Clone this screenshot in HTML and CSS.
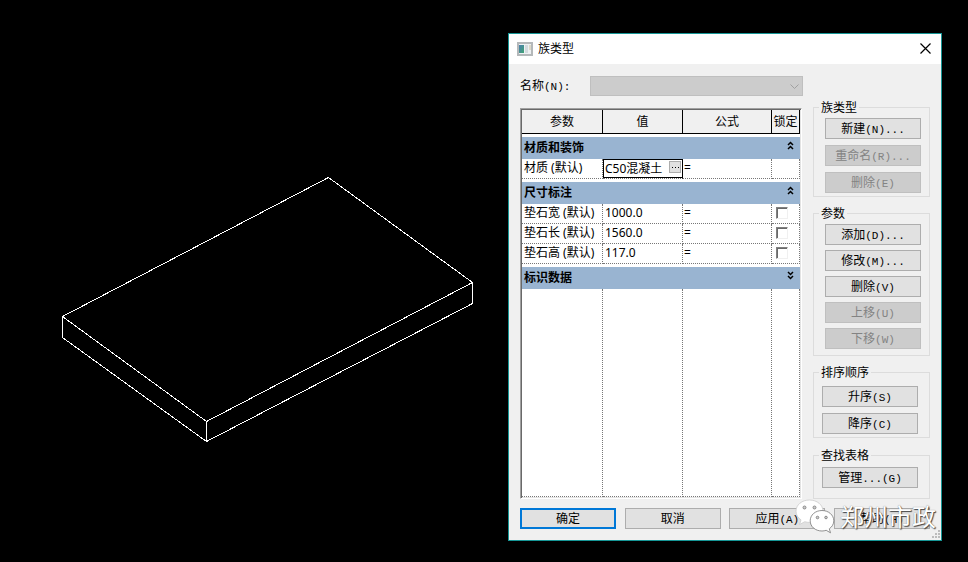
FILE: index.html
```html
<!DOCTYPE html>
<html lang="zh-CN">
<head>
<meta charset="utf-8">
<meta name="viewport" content="width=device-width, initial-scale=1">
<title>族类型</title>
<link rel="stylesheet" href="styles.css">
</head>
<body>
<main class="workspace">
  <svg class="model" viewBox="0 0 508 562" aria-hidden="true">
    <path d="M62.500 316.500 328.500 177.500 472.500 282.500 206.500 421.500ZM62.500 316.500V337.500L206.500 441.500 472.500 303.500V282.500M206.500 421.500V441.500"/>
  </svg>

  <section class="dialog" role="dialog" aria-labelledby="dialog-title">
    <header class="titlebar">
      <svg class="app-icon" width="16" height="14" viewBox="0 0 16 14" aria-hidden="true">
        <defs>
          <linearGradient id="pane" x1="0" y1="0" x2="1" y2="1">
            <stop offset="0" stop-color="#4d7fb0"/>
            <stop offset="1" stop-color="#3fa372"/>
          </linearGradient>
        </defs>
        <rect x="1" y="1" width="14" height="12" fill="#eef1f3" stroke="#b4b8ba" stroke-width="2"/>
        <rect x="2" y="3" width="5" height="8" fill="url(#pane)"/>
        <rect x="8" y="3" width="3" height="8" fill="#d3dade"/>
        <rect x="12" y="3" width="2" height="5" fill="#dcd9c8"/>
      </svg>
      <h1 class="title" id="dialog-title">族类型</h1>
      <button class="close" type="button" aria-label="关闭">
        <svg width="11" height="11" viewBox="0 0 11 11" aria-hidden="true"><path d="M0.500 0.500 10.500 10.500M10.500 0.500 0.500 10.500"/></svg>
      </button>
    </header>

    <form class="content">
      <div class="name-row">
        <label for="type-name">名称<span class="key">(N):</span></label>
        <div class="select-wrap">
          <select id="type-name" disabled></select>
          <svg class="select-arrow" width="9" height="6" viewBox="0 0 9 6" aria-hidden="true"><path d="M0.500 0.500 4.500 4.500 8.500 0.500"/></svg>
        </div>
      </div>

      <div class="main">
        <div class="grid-frame">
          <table class="params">
            <colgroup>
              <col class="col-name"><col class="col-value"><col><col class="col-lock">
            </colgroup>
            <thead>
              <tr><th>参数</th><th>值</th><th>公式</th><th>锁定</th></tr>
            </thead>
            <tbody>
              <tr class="group">
                <th colspan="4"><button type="button" class="toggle">材质和装饰
                  <svg width="7" height="9" viewBox="0 0 7 9" aria-hidden="true"><path d="M1 4 3.500 1.500 6 4M1 8 3.500 5.500 6 8"/></svg></button></th>
              </tr>
              <tr class="item">
                <td><label for="material">材质 (默认)</label></td>
                <td class="editing"><div class="editor"><input id="material" type="text" value="C50混凝土"><button type="button" class="browse" aria-label="浏览"><svg width="7" height="1" viewBox="0 0 7 1" aria-hidden="true"><path d="M0 0h1v1h-1zM3 0h1v1h-1zM6 0h1v1h-1z"/></svg></button></div></td>
                <td>=</td><td></td>
              </tr>
              <tr class="group">
                <th colspan="4"><button type="button" class="toggle">尺寸标注
                  <svg width="7" height="9" viewBox="0 0 7 9" aria-hidden="true"><path d="M1 4 3.500 1.500 6 4M1 8 3.500 5.500 6 8"/></svg></button></th>
              </tr>
              <tr class="item"><td>垫石宽 (默认)</td><td>1000.0</td><td>=</td><td><input type="checkbox" aria-label="锁定垫石宽"></td></tr>
              <tr class="item"><td>垫石长 (默认)</td><td>1560.0</td><td>=</td><td><input type="checkbox" aria-label="锁定垫石长"></td></tr>
              <tr class="item"><td>垫石高 (默认)</td><td>117.0</td><td>=</td><td><input type="checkbox" aria-label="锁定垫石高"></td></tr>
              <tr class="group">
                <th colspan="4"><button type="button" class="toggle">标识数据
                  <svg width="7" height="9" viewBox="0 0 7 9" aria-hidden="true"><path d="M1 1 3.500 3.500 6 1M1 5 3.500 7.500 6 5"/></svg></button></th>
              </tr>
              <tr class="filler"><td></td><td></td><td></td><td></td></tr>
            </tbody>
          </table>
        </div>

        <div class="side">
          <fieldset>
            <legend>族类型</legend>
            <div class="stack types">
              <button type="button" class="btn">新建<span class="key">(N)...</span></button>
              <button type="button" class="btn" disabled>重命名<span class="key">(R)...</span></button>
              <button type="button" class="btn" disabled>删除<span class="key">(E)</span></button>
            </div>
          </fieldset>
          <fieldset>
            <legend>参数</legend>
            <div class="stack parameters">
              <button type="button" class="btn">添加<span class="key">(D)...</span></button>
              <button type="button" class="btn">修改<span class="key">(M)...</span></button>
              <button type="button" class="btn">删除<span class="key">(V)</span></button>
              <button type="button" class="btn" disabled>上移<span class="key">(U)</span></button>
              <button type="button" class="btn" disabled>下移<span class="key">(W)</span></button>
            </div>
          </fieldset>
          <fieldset>
            <legend>排序顺序</legend>
            <div class="stack sorting">
              <button type="button" class="btn">升序<span class="key">(S)</span></button>
              <button type="button" class="btn">降序<span class="key">(C)</span></button>
            </div>
          </fieldset>
          <fieldset>
            <legend>查找表格</legend>
            <div class="stack lookup">
              <button type="button" class="btn">管理<span class="key">...(G)</span></button>
            </div>
          </fieldset>
        </div>
      </div>

      <footer class="actions">
        <button type="button" class="btn primary">确定</button>
        <button type="button" class="btn">取消</button>
        <button type="button" class="btn">应用<span class="key">(A)</span></button>
        <button type="button" class="btn">帮助<span class="key">(H)</span></button>
      </footer>
    </form>

    <svg class="grip" width="8" height="8" viewBox="0 0 8 8" aria-hidden="true"><path d="M6 0h2v2h-2zM3 3h2v2h-2zM6 3h2v2h-2zM0 6h2v2h-2zM3 6h2v2h-2zM6 6h2v2h-2z"/></svg>

    <div class="watermark">
      <svg width="40" height="36" viewBox="0 0 40 36" aria-hidden="true">
        <path class="bubble" d="M14.500 1C6.800 1 1 5.900 1 12.200c0 3.600 1.900 6.600 5 8.700L4.600 25.500l5.200-2.800c1.700.5 3.100.7 4.700.7C22 23.400 28 18.500 28 12.200S22 1 14.500 1Z"/>
        <path class="bubble front" d="M27 11.500c-6.700 0-11.800 4.500-11.800 10.300S20.300 32 27 32c1.500 0 2.900-.3 4.200-.7l4.300 2.500-1.200-4c2.700-1.900 4.500-4.700 4.500-8C38.800 16 33.500 11.500 27 11.500Z"/>
        <g class="eyes">
          <circle cx="9.500" cy="8.500" r="1.500"/><circle cx="19.500" cy="8.500" r="1.500"/>
          <circle cx="22.500" cy="18.500" r="1.300"/><circle cx="31" cy="18.500" r="1.300"/>
        </g>
      </svg>
      <span>郑州市政</span>
    </div>
  </section>
</main>
</body>
</html>
```
FILE: styles.css
```css
* { box-sizing: border-box; }

body {
  margin: 0;
  background: #000;
  color: #000;
  font: 12px/14px "Noto Sans", "Noto Sans CJK SC", sans-serif;
}

button, input, select { font: inherit; color: inherit; margin: 0; }

.workspace {
  display: grid;
  grid-template-columns: minmax(0, 508fr) minmax(434px, 434fr) 26fr;
  align-items: start;
  min-height: 100vh;
}

.model { width: 100%; }
.model path { fill: none; stroke: #fff; stroke-width: 1; shape-rendering: crispEdges; }

.dialog {
  position: relative;
  margin-top: 33px;
  border: 1px solid #169696;
  background: #f0f0f0;
}

.titlebar {
  display: flex;
  align-items: center;
  height: 30px;
  padding: 0 10px 0 8px;
  background: #fff;
}
.title { flex: 1; margin: 0 0 0 5px; font-size: 12px; font-weight: 400; }
.close { display: flex; padding: 0; border: 0; background: none; }
.close svg { margin-bottom: 2px; }
.close path { fill: none; stroke: #000; stroke-width: 1.2; }

.content { padding: 12px 11px 11px; }

.name-row { display: flex; align-items: center; margin-bottom: 5px; }
.name-row label { width: 70px; }
.key { font-family: "Liberation Mono", monospace; font-size: 11px; }

.select-wrap { position: relative; flex: 1; max-width: 213px; height: 20px; }
.select-wrap select {
  display: block;
  width: 100%;
  height: 100%;
  border: 1px solid #bfbfbf;
  border-radius: 0;
  background: #ccc;
  appearance: none;
  opacity: 1;
}
.select-arrow { position: absolute; right: 4px; top: 8px; }
.select-arrow path { fill: none; stroke: #a0a0a0; }

.main { display: grid; grid-template-columns: minmax(0, 1fr) 117px; gap: 11px; }

.grid-frame {
  display: grid;
  margin-top: 7px;
  border: 1px solid;
  border-color: #a0a0a0 #fff #fff #a0a0a0;
  background: #fff;
  box-shadow: inset 1px 1px #696969, inset -1px -1px #e3e3e3;
  padding: 1px;
}

.params { width: 100%; height: 100%; table-layout: fixed; border-collapse: separate; border-spacing: 0; }
.col-name { width: 81px; }
.col-value { width: 80px; }
.col-lock { width: 28px; }
.params td, .params th { padding: 0; white-space: nowrap; }
.params thead th {
  height: 24px;
  border-right: 1px solid #000;
  border-bottom: 1px solid #000;
  background: #f0f0f0;
  font-weight: 400;
}
.group th { height: 25px; border-top: 3px solid #fff; background: #99b4d1; }
.toggle {
  display: flex;
  justify-content: space-between;
  width: 100%;
  height: 22px;
  padding: 4px 6px 0 2px;
  border: 0;
  background: none;
  font-weight: 700;
}
.toggle path { fill: none; stroke: #000; stroke-width: 1.5; }
.item td, .filler td { border-right: 1px dotted #777; border-bottom: 1px dotted #777; }
.item td { height: 20px; padding: 0 0 1px 2px; }
.item td:nth-child(3) { padding-left: 1px; }
.item td:last-child { padding-left: 4px; }
.item td.editing { padding: 0; border-right: 1px solid #000; }
.editor { display: flex; height: 19px; border: 1px solid #000; border-right: 0; }
.editor input { flex: 1; min-width: 0; padding: 0 0 0 1px; border: 0; outline: 0; background: none; }
.browse {
  display: flex;
  align-items: center;
  justify-content: center;
  width: 12px;
  height: 12px;
  margin: 1px 1px 0 0;
  padding: 0;
  border: 1px solid #adadad;
  background: #e1e1e1;
}

.params input[type="checkbox"] {
  display: block;
  width: 12px;
  height: 12px;
  appearance: none;
  border: 1px solid;
  border-color: #808080 #f0f0f0 #f0f0f0 #808080;
  box-shadow: inset 1px 1px #696969;
}

.side { display: flex; flex-direction: column; gap: 10px; }
fieldset { min-width: 0; margin: 0; padding: 0; border: 1px solid #dcdcdc; }
legend { margin-left: 5px; padding: 1px 2px 0; line-height: 14px; }
.side { margin-top: -1px; }
.stack { display: grid; }
.types { gap: 6px; padding: 3px 8px 3px 11px; }
.parameters { gap: 5px; padding: 3px 8px 6px 11px; }
.sorting { gap: 6px; padding: 6px 11px 3px 8px; }
.lookup { padding: 4px 11px 10px 8px; }
.side { gap: 9px; }
.side fieldset:last-child { margin-top: 1px; }

.btn {
  height: 21px;
  padding: 1px 0 0;
  border: 1px solid #adadad;
  background: #e1e1e1;
  line-height: 14px;
}
.btn:disabled { border-color: #bfbfbf; background: #ccc; color: #838383; }
.btn.primary { border: 2px solid #0078d7; }

.actions { display: flex; justify-content: space-between; margin-top: 9px; }
.actions .btn { width: 96px; }

.grip { position: absolute; right: 1px; bottom: 2px; }
.grip path { fill: #bcbcbc; }

.watermark {
  position: absolute;
  right: 5px;
  bottom: 5px;
  display: flex;
  align-items: center;
  gap: 5px;
  color: #fff;
  font-size: 24px;
  line-height: 36px;
  text-shadow: 1px 1px 1px #444, 0 0 1px #777;
  pointer-events: none;
}
.bubble { fill: #fff; stroke: #ccc; stroke-width: 0.8; }
.bubble.front { stroke: #777; }
.eyes { fill: #ccc; stroke: #777; stroke-width: 0.8; }
```
